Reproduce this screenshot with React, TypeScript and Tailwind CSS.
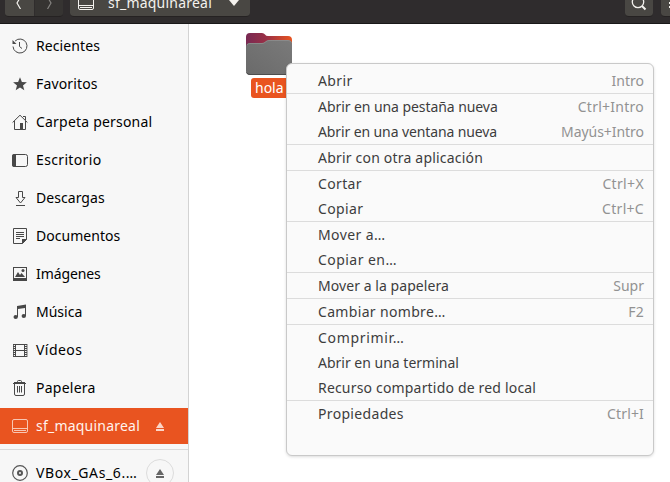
import type { ReactNode } from "react";

const icons: Record<string, ReactNode> = {
  recent: (
    <g fill="none" stroke="currentColor">
      <path d="M3.1 3A7 7 0 1 1 1 8.5" />
      <path d="M7.5 4v4.5l2.5 2" />
      <path d="M.5 2v4h4z" fill="currentColor" stroke="none" />
    </g>
  ),
  star: <path fill="currentColor" d="M8 1.2l1.900 4.700 5 .3-3.900 3.200 1.300 4.900L8 11.600l-4.300 2.700L5 9.400 1.100 6.200l5-.3z" />,
  home: (
    <g fill="none" stroke="currentColor">
      <path d="M.6 8.500L8 1.200l7.400 7.300M2.500 7v8.500h11V7M11 2.500h2.500V6" />
      <path d="M8 9h3v6.500H8z" fill="currentColor" stroke="none" />
    </g>
  ),
  desktop: (
    <g>
      <rect x=".5" y="2.500" width="15" height="12" rx="2" fill="none" stroke="currentColor" />
      <path d="M2 2h2v13H2a2 2 0 0 1-2-2V4a2 2 0 0 1 2-2z" fill="currentColor" />
    </g>
  ),
  download: (
    <path d="M6.500 1.500h4v6H13L8.500 13 4 7.500h2.500zM4 15.500h9" fill="none" stroke="currentColor" />
  ),
  document: (
    <g fill="none" stroke="currentColor">
      <path d="M1.500.5h13v11l-4 4h-9z" />
      <path d="M4 4.500h8M4 6.500h8M4 8.500h8M4 10.500h4" />
      <path d="M10 16v-5h5z" fill="currentColor" stroke="none" />
    </g>
  ),
  image: (
    <g fill="currentColor">
      <path d="M1 1h14v14H1zM2 2v10h12V2z" fillRule="evenodd" />
      <path d="M3 11l3-5 2 3 1.500-2L13 11z" />
      <circle cx="11" cy="4.500" r="1.500" />
    </g>
  ),
  music: (
    <g fill="currentColor">
      <path d="M5 2l9-1.500V12h-1V4L6 5v8H5z" />
      <ellipse cx="3.700" cy="13" rx="2.200" ry="1.900" />
      <ellipse cx="11.800" cy="12" rx="2.200" ry="1.900" />
    </g>
  ),
  video: (
    <g fill="none" stroke="currentColor">
      <path d="M3.500 2v13M12.500 2v13M3.500 2.500h9M3.500 8.500h9M3.500 14.500h9" />
      <path d="M2 2v13M14 2v13" strokeWidth="2" strokeDasharray="1 1" />
      <path d="M1.500 2v13M15 2v13" strokeWidth=".8" />
    </g>
  ),
  trash: (
    <g fill="none" stroke="currentColor">
      <path d="M5.500 2.500v-1a1 1 0 0 1 1-1h2a1 1 0 0 1 1 1v1M1 3.500h13" />
      <path d="M2 2.500h11" />
      <path d="M2.500 4v10a1.500 1.500 0 0 0 1.500 1.500h7a1.500 1.500 0 0 0 1.500-1.500V4M5.500 6v6.500M7.500 6v6.500M9.500 6v6.500" />
    </g>
  ),
  drive: (
    <g fill="none" stroke="currentColor">
      <rect x=".5" y="1.500" width="15" height="13" rx="1.500" />
      <path d="M.5 10.500h15M2 12.500h12" />
    </g>
  ),
  disc: (
    <g fill="none" stroke="currentColor">
      <circle cx="8" cy="8" r="7.300" strokeWidth="1.200" />
      <circle cx="8" cy="8" r="2" strokeWidth="2" />
    </g>
  ),
};

function Icon({ name, className = "" }: { name: string; className?: string }) {
  return (
    <svg viewBox="0 0 16 16" className={`size-4 shrink-0 ${className}`}>
      {icons[name]}
    </svg>
  );
}

function Eject() {
  return (
    <svg viewBox="0 0 8 9" className="h-[9px] w-2" fill="currentColor">
      <path d="M4 0l4 6H0zM0 7h8v2H0z" />
    </svg>
  );
}

const places = [
  ["recent", "Recientes", "tracking-[0.1px]"],
  ["star", "Favoritos", "tracking-[0.15px]"],
  ["home", "Carpeta personal", "tracking-[0.2px]"],
  ["desktop", "Escritorio", "tracking-[0.35px]"],
  ["download", "Descargas", "tracking-[0.05px]"],
  ["document", "Documentos", "tracking-[0.04px]"],
  ["image", "Imágenes", "tracking-[-0.1px]"],
  ["music", "Música", "tracking-normal"],
  ["video", "Vídeos", "tracking-[0.45px]"],
  ["trash", "Papelera", "tracking-[0.25px]"],
];

type Item = { label: string; keys?: string; fit?: string; keysFit?: string };

const menu: Item[][] = [
  [{ label: "Abrir", keys: "Intro", fit: "tracking-[0.4px]" }],
  [
    { label: "Abrir en una pestaña nueva", keys: "Ctrl+Intro", fit: "tracking-[-0.07px]", keysFit: "tracking-[0.25px]" },
    { label: "Abrir en una ventana nueva", keys: "Mayús+Intro", fit: "tracking-[-0.11px]", keysFit: "tracking-[-0.05px]" },
  ],
  [{ label: "Abrir con otra aplicación", fit: "tracking-[0.2px]" }],
  [
    { label: "Cortar", keys: "Ctrl+X", fit: "tracking-[0.35px]", keysFit: "tracking-[0.35px]" },
    { label: "Copiar", keys: "Ctrl+C", fit: "tracking-[0.35px]", keysFit: "tracking-[0.3px]" },
  ],
  [
    { label: "Mover a…", fit: "tracking-[0.4px]" },
    { label: "Copiar en…", fit: "tracking-[0.45px]" },
  ],
  [{ label: "Mover a la papelera", keys: "Supr", fit: "tracking-[0.06px]" }],
  [{ label: "Cambiar nombre…", keys: "F2", fit: "tracking-[0.33px]", keysFit: "tracking-[0.3px]" }],
  [
    { label: "Comprimir…", fit: "tracking-[0.68px]" },
    { label: "Abrir en una terminal" },
    { label: "Recurso compartido de red local", fit: "tracking-[0.18px]" },
  ],
  [{ label: "Propiedades", keys: "Ctrl+I", fit: "tracking-[0.33px]", keysFit: "tracking-[0.15px]" }],
];

function Header() {
  return (
    <header className="flex h-6 shrink-0 items-end overflow-hidden border-b border-[#191818] bg-[#2f2c2d] pb-1.5 pl-[5px] text-[#f4f2ee]">
      <div className="flex h-7 w-[58px] overflow-hidden rounded-b border-b border-[#252222]">
        <div className="flex flex-1 items-center justify-center border-r border-[#302d2d] bg-[#494743]">
          <svg viewBox="0 0 6 12" className="h-3 w-1.5" fill="none" stroke="currentColor">
            <path d="M4.500 0L1 6l3.500 6" strokeWidth="1.200" />
          </svg>
        </div>
        <div className="flex flex-1 items-center justify-center bg-[#363432] text-[#858380]">
          <svg viewBox="0 0 6 12" className="h-3 w-1.5" fill="none" stroke="currentColor">
            <path d="M1.500 0L5 6l-3.500 6" strokeWidth="1.200" />
          </svg>
        </div>
      </div>
      <div className="ml-[7px] flex h-7 w-[180px] items-center rounded-b border-b border-[#252222] bg-[#494743] pl-2">
        <Icon name="drive" />
        <span className="ml-3.5 w-[121px] whitespace-nowrap leading-5 tracking-[0.22px]">sf_maquinareal</span>
        <svg viewBox="0 0 10 6" className="mt-px h-1.5 w-2.5" fill="currentColor">
          <path d="M0 0h10L5 6z" />
        </svg>
      </div>
      <div className="ml-auto flex h-7 w-7 items-center justify-center rounded-b border-b border-[#252222] bg-[#494743]">
        <svg viewBox="0 0 16 16" className="size-4" fill="none" stroke="currentColor">
          <circle cx="7" cy="7" r="5.700" strokeWidth="1.300" />
          <path d="M11 11l3.500 3.500" strokeWidth="2" />
        </svg>
      </div>
      <div className="ml-2 flex h-7 w-[9px] items-center justify-end overflow-hidden rounded-bl border-b border-[#252222] bg-[#494743]">
        <div className="flex w-px flex-col gap-0.5">
          <i className="h-0.5 bg-current" />
          <i className="h-0.5 bg-current" />
          <i className="h-0.5 bg-current" />
        </div>
      </div>
    </header>
  );
}

function Sidebar() {
  return (
    <aside className="flex w-[189px] shrink-0 flex-col border-r border-[#d3d3d3] bg-[#f7f7f7] pt-1 text-black">
      {places.map(([icon, label, fit]) => (
        <div key={label} className="mb-0.5 flex h-9 shrink-0 items-center pl-3">
          <Icon name={icon} className="text-[#484848]" />
          <span className={`ml-2 whitespace-nowrap ${fit}`}>{label}</span>
        </div>
      ))}
      <div className="flex h-9 shrink-0 items-center bg-[#e95420] pl-3 text-[#fff3ee]">
        <Icon name="drive" className="text-[#f8c5b3]" />
        <span className="ml-2 w-[120px] whitespace-nowrap tracking-[0.22px]">sf_maquinareal</span>
        <span className="text-[#fbd5c7]"><Eject /></span>
      </div>
      <div className="mt-[5px] h-px shrink-0 bg-[#dadada]" />
      <div className="mt-[5px] flex h-9 shrink-0 items-center pl-3">
        <Icon name="disc" className="text-[#555]" />
        <span className="ml-2 w-[110px] whitespace-nowrap tracking-[0.6px]">VBox_GAs_6.…</span>
        <span className="flex size-7 items-center justify-center rounded-full border border-[#dcdcdc] text-[#666]">
          <Eject />
        </span>
      </div>
    </aside>
  );
}

function Folder() {
  return (
    <figure className="ml-14 mt-2 flex w-12 flex-col">
      <svg viewBox="0 0 48 44" className="h-11 w-12">
        <defs>
          <linearGradient id="back">
            <stop offset="0" stopColor="#772953" />
            <stop offset=".45" stopColor="#9b3045" />
            <stop offset="1" stopColor="#e95420" />
          </linearGradient>
          <linearGradient id="front" x1="0" x2="1" y1="1" y2="0">
            <stop offset="0" stopColor="#6a6a6a" />
            <stop offset="1" stopColor="#7a7a7a" />
          </linearGradient>
        </defs>
        <path d="M1 5q0-4 4-4h12q2 0 3 1.500T23 4h20q4 0 4 4v20H1z" fill="url(#back)" />
        <path d="M1 15q0-4 4-4h12q2 0 3.500-1.500T24 8h19q4 0 4 4v27q0 4-4 4H5q-4 0-4-4z" fill="url(#front)" />
        <path d="M2 13q1-1.500 3-1.500h12q2 0 3.500-1.500T24 8.500h19q2 0 3.500 2" fill="none" stroke="#929292" strokeWidth=".7" />
        <path d="M1.500 40.500q1 2 3.500 2h38q2.500 0 3.500-2" fill="none" stroke="#4d4d4d" />
      </svg>
      <figcaption className="ml-1.5 mt-0.5 h-5 w-[38px] rounded-[3px] bg-[#e95420] pl-1 leading-5 text-white">hola</figcaption>
    </figure>
  );
}

function ContextMenu() {
  return (
    <div className="absolute left-[286px] top-[63px] h-[393px] w-[368px] rounded-md border border-[#c9c9c9] bg-[#fafafa] pt-1 text-[#3d3d3d] shadow-[0_1px_3px_rgba(0,0,0,0.14)]">
      {menu.map((group, index) => (
        <div key={index} className="border-b border-[#dcdcdc] last:border-b-0">
          {group.map((item) => (
            <div key={item.label} className="flex h-[25px] items-center justify-between whitespace-nowrap pl-[31px] pr-[9px]">
              <span className={item.fit}>{item.label}</span>
              <span className={`text-[#929292] ${item.keysFit ?? ""}`}>{item.keys}</span>
            </div>
          ))}
        </div>
      ))}
    </div>
  );
}

export default function App() {
  return (
    <div className="relative flex h-[482px] w-[670px] flex-col overflow-hidden bg-white font-['Noto_Sans',sans-serif] text-[14px] leading-5">
      <Header />
      <div className="flex min-h-0 flex-1">
        <Sidebar />
        <main className="flex-1">
          <Folder />
        </main>
      </div>
      <ContextMenu />
    </div>
  );
}
